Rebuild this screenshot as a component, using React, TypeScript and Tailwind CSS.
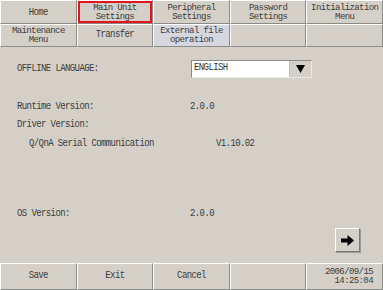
import React from 'react';

const cell =
    'flex flex-col items-center justify-center leading-[9px] text-center border-t border-l border-t-white border-l-white border-r border-b border-r-[#8a8a86] border-b-[#8a8a86]';

// the panel font is tall and narrow, so stretch the mono glyphs a bit
const tall = 'inline-block whitespace-pre scale-y-[1.25]';

function ArrowButton() {
    return (
        <div className="w-[25px] h-[24px] flex items-center justify-center bg-[#d4d0c8] border border-t-white border-l-white border-r-[#7a7a76] border-b-[#7a7a76] shadow-[1px_1px_0_#9a9a96]">
            <svg width="13" height="11" viewBox="0 0 13 11">
                <path d="M0 3.5H6.5V0L13 5.5L6.5 11V7.5H0Z" fill="#000" />
            </svg>
        </div>
    );
}

export default function App() {
    const topTabs = [
        ['Home'],
        ['Main Unit', 'Settings'],
        ['Peripheral', 'Settings'],
        ['Password', 'Settings'],
        ['Initialization', 'Menu'],
    ];
    const subTabs = [['Maintenance', 'Menu'], ['Transfer'], ['External file', 'operation'], [], []];
    const bottom = [['Save'], ['Exit'], ['Cancel'], [], ['2006/09/15', '14:25:04']];

    const lines = (t: string[]) =>
        t.map(line => (
            <span key={line} className={t.length > 1 ? 'whitespace-pre' : tall}>{line}</span>
        ));

    return (
        <div className="w-[383px] h-[290px] bg-[#d4d0c8] flex flex-col text-[9px] text-[#3c3c3c] font-['Liberation_Mono',monospace] tracking-[-0.6px] overflow-hidden">
            <div className="grid grid-cols-5 h-[24px]">
                {topTabs.map((t, i) => (
                    <div key={i} className={`${cell} relative pt-[2px]`}>
                        {lines(t)}
                        {i === 1 && (
                            <div className="absolute left-0 right-0 top-0 bottom-0 border-2 border-[#e3141e]" />
                        )}
                    </div>
                ))}
            </div>
            <div className="grid grid-cols-5 h-[23px]">
                {subTabs.map((t, i) => (
                    <div key={i} className={`${cell} ${i === 2 ? 'bg-[#d6d6df]' : ''}`}>
                        {lines(t)}
                    </div>
                ))}
            </div>

            <div className="h-[216px] flex flex-col">
                <div className="mt-[13px] h-[18px] flex items-center">
                    <span className="pl-[17px] w-[191px] pt-[2px]"><span className={tall}>OFFLINE LANGUAGE:</span></span>
                    <div className="w-[121px] h-[18px] flex bg-white border border-t-[#8a8a86] border-l-[#8a8a86] border-r-[#e8e8e8] border-b-[#e8e8e8]">
                        <span className="flex-1 flex items-center pl-[2px] text-[#333]"><span className={tall}>ENGLISH</span></span>
                        <div className="w-[22px] flex items-center justify-center bg-[#d4d0c8] border-l border-[#bcbcb8]">
                            <svg width="9" height="8" viewBox="0 0 9 8">
                                <path d="M0 0H9L4.5 8Z" fill="#000" />
                            </svg>
                        </div>
                    </div>
                </div>

                <div className="mt-[24px] h-[12px] flex items-center">
                    <span className="pl-[17px] w-[190px]"><span className={tall}>Runtime Version:</span></span>
                    <span className={tall}>2.0.0</span>
                </div>
                <div className="mt-[6px] h-[12px] flex items-center">
                    <span className="pl-[17px]"><span className={tall}>Driver Version:</span></span>
                </div>
                <div className="mt-[7px] h-[12px] flex items-center">
                    <span className="pl-[29px] w-[216px]"><span className={tall}>Q/QnA Serial Communication</span></span>
                    <span className={tall}>V1.10.02</span>
                </div>

                <div className="mt-[58px] h-[12px] flex items-center">
                    <span className="pl-[17px] w-[190px]"><span className={tall}>OS Version:</span></span>
                    <span className={tall}>2.0.0</span>
                </div>

                <div className="mt-[7px] flex justify-end pr-[23px]">
                    <ArrowButton />
                </div>
            </div>

            <div className="grid grid-cols-5 h-[27px]">
                {bottom.map((t, i) => (
                    <div key={i} className={`${cell} ${i === 4 ? 'items-end pr-[9px]' : ''}`}>
                        {lines(t)}
                    </div>
                ))}
            </div>
        </div>
    );
}
